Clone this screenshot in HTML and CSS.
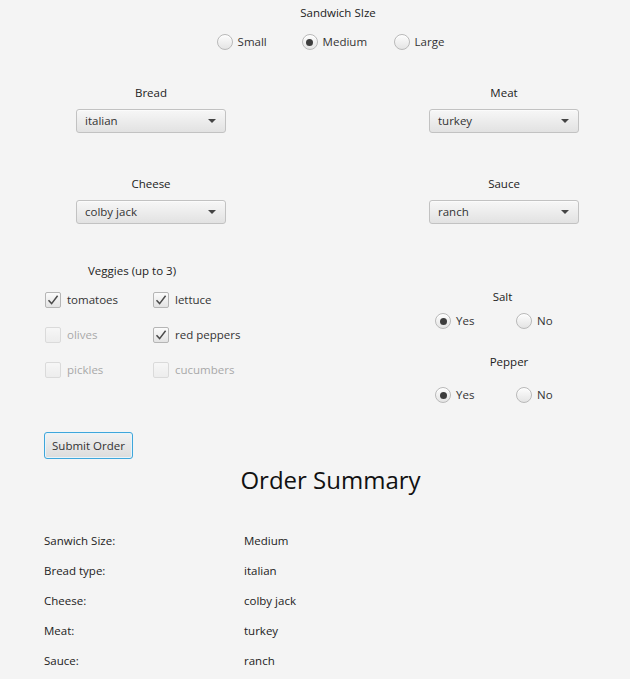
FILE: index.html
```html
<!DOCTYPE html>
<html>
<head>
<meta charset="utf-8">
<title>Sandwich Order</title>
<link rel="stylesheet" href="styles.css">
</head>
<body>
<div class="app">
  <section class="size">
    <div class="caption">Sandwich SIze</div>
    <div class="size-radios">
      <label class="radio"><span class="dot"></span>Small</label>
      <label class="radio selected"><span class="dot"></span>Medium</label>
      <label class="radio"><span class="dot"></span>Large</label>
    </div>
  </section>

  <section class="choices">
    <div class="field">
      <div class="caption">Bread</div>
      <div class="combo"><span>italian</span><i class="arrow"></i></div>
    </div>
    <div class="field">
      <div class="caption">Meat</div>
      <div class="combo"><span>turkey</span><i class="arrow"></i></div>
    </div>
    <div class="field">
      <div class="caption">Cheese</div>
      <div class="combo"><span>colby jack</span><i class="arrow"></i></div>
    </div>
    <div class="field">
      <div class="caption">Sauce</div>
      <div class="combo"><span>ranch</span><i class="arrow"></i></div>
    </div>
  </section>

  <section class="extras">
    <div class="veggies">
      <div class="caption veg-caption">Veggies (up to 3)</div>
      <div class="checks">
        <label class="check checked"><span class="box"><svg viewBox="0 0 16 16" width="16" height="16"><polyline points="3.5,8.2 6.6,11.6 12.6,3.8" fill="none" stroke="#4a4a4a" stroke-width="1.5"/></svg></span>tomatoes</label>
        <label class="check checked"><span class="box"><svg viewBox="0 0 16 16" width="16" height="16"><polyline points="3.5,8.2 6.6,11.6 12.6,3.8" fill="none" stroke="#4a4a4a" stroke-width="1.5"/></svg></span>lettuce</label>
        <label class="check disabled"><span class="box"></span>olives</label>
        <label class="check checked"><span class="box"><svg viewBox="0 0 16 16" width="16" height="16"><polyline points="3.5,8.2 6.6,11.6 12.6,3.8" fill="none" stroke="#4a4a4a" stroke-width="1.5"/></svg></span>red peppers</label>
        <label class="check disabled"><span class="box"></span>pickles</label>
        <label class="check disabled"><span class="box"></span>cucumbers</label>
      </div>
    </div>
    <div class="seasoning">
      <div class="caption salt-caption">Salt</div>
      <div class="yn salt-row">
        <label class="radio selected"><span class="dot"></span>Yes</label>
        <label class="radio"><span class="dot"></span>No</label>
      </div>
      <div class="caption pepper-caption">Pepper</div>
      <div class="yn pepper-row">
        <label class="radio selected"><span class="dot"></span>Yes</label>
        <label class="radio"><span class="dot"></span>No</label>
      </div>
    </div>
  </section>

  <div class="actions">
    <button class="submit">Submit Order</button>
  </div>

  <h1 class="title">Order Summary</h1>

  <div class="summary">
    <div class="key">Sanwich Size:</div><div class="val">Medium</div>
    <div class="key">Bread type:</div><div class="val">italian</div>
    <div class="key">Cheese:</div><div class="val">colby jack</div>
    <div class="key">Meat:</div><div class="val">turkey</div>
    <div class="key">Sauce:</div><div class="val">ranch</div>
  </div>
</div>
</body>
</html>
```

FILE: styles.css
```css
html, body {
  margin: 0;
  padding: 0;
  background: #f4f4f4;
}
body {
  font-family: "Open Sans", "Noto Sans", sans-serif;
  font-size: 11.5px;
  line-height: 16px;
  color: #333333;
}
.app {
  width: 630px;
  height: 679px;
  overflow: hidden;
  display: flex;
  flex-direction: column;
}
.caption {
  color: #222;
  white-space: nowrap;
}

/* size */
.size {
  padding-top: 5px;
  padding-left: 46px;
  display: flex;
  flex-direction: column;
  align-items: center;
}
.size-radios {
  margin-top: 13px;
  margin-right: 15px;
  display: grid;
  grid-template-columns: 85px 92px auto;
}
.radio {
  display: flex;
  align-items: center;
  gap: 5px;
  height: 16px;
  white-space: nowrap;
}
.dot {
  width: 14px;
  height: 14px;
  border-radius: 50%;
  border: 1px solid #b9b9b9;
  background: linear-gradient(#fdfdfd, #e4e4e4);
  box-shadow: inset 0 1px 0 #ffffff;
  position: relative;
  flex: none;
}
.radio.selected .dot::after {
  content: "";
  position: absolute;
  left: 3.5px;
  top: 3.5px;
  width: 7px;
  height: 7px;
  border-radius: 50%;
  background: #3d3d3d;
}

/* choices */
.choices {
  margin-top: 35px;
  padding-left: 76px;
  display: grid;
  grid-template-columns: 150px 150px;
  column-gap: 203px;
  row-gap: 43px;
}
.field {
  display: flex;
  flex-direction: column;
  align-items: center;
  gap: 8px;
}
.combo {
  box-sizing: border-box;
  width: 150px;
  height: 24px;
  border: 1px solid #c2c2c2;
  border-radius: 3px;
  background: linear-gradient(#f7f7f7, #e2e2e2);
  box-shadow: inset 0 1px 0 #fbfbfb;
  display: flex;
  align-items: center;
  justify-content: space-between;
  padding: 0 9px 0 8px;
}
.arrow {
  width: 0;
  height: 0;
  border-left: 4px solid transparent;
  border-right: 4px solid transparent;
  border-top: 4px solid #444;
}

/* extras */
.extras {
  margin-top: 39px;
  display: grid;
  grid-template-columns: 435px 140px;
}
.veggies {
  padding-left: 45px;
}
.veg-caption {
  margin-left: 43px;
}
.checks {
  margin-top: 13px;
  display: grid;
  grid-template-columns: 108px auto;
  row-gap: 19px;
}
.check {
  display: flex;
  align-items: center;
  gap: 6px;
  height: 16px;
  white-space: nowrap;
}
.box {
  box-sizing: border-box;
  width: 16px;
  height: 16px;
  border: 1px solid #b5b5b5;
  border-radius: 2px;
  background: linear-gradient(#fbfbfb, #e3e3e3);
  flex: none;
  position: relative;
}
.box svg {
  position: absolute;
  left: -1px;
  top: -1px;
}
.check.disabled {
  opacity: 0.4;
}
.seasoning {
  padding-top: 26px;
  display: flex;
  flex-direction: column;
}
.seasoning .caption {
  text-align: center;
}
.yn {
  display: grid;
  grid-template-columns: 81px auto;
}
.salt-row { margin-top: 8px; }
.pepper-row { margin-top: 17px; }
.salt-caption { margin-right: 5px; }
.pepper-caption {
  margin-top: 25px;
  margin-left: 8px;
}

/* actions */
.actions {
  margin-top: 29px;
  padding-left: 44px;
  display: flex;
}
.submit {
  box-sizing: border-box;
  width: 89px;
  height: 27px;
  font: inherit;
  color: #333;
  border: 1px solid #3ea6db;
  border-radius: 3px;
  background: linear-gradient(#f2f2f2, #dcdcdc);
  box-shadow: inset 0 0 0 1px #e8f4fa;
  padding: 0;
}

.title {
  margin: 5px 0 0 0;
  padding-left: 31px;
  text-align: center;
  font-weight: normal;
  font-size: 24px;
  line-height: 32px;
  color: #111;
}

.summary {
  margin-top: 37px;
  padding-left: 44px;
  display: grid;
  grid-template-columns: 200px auto;
  row-gap: 14px;
  color: #222;
}
```
